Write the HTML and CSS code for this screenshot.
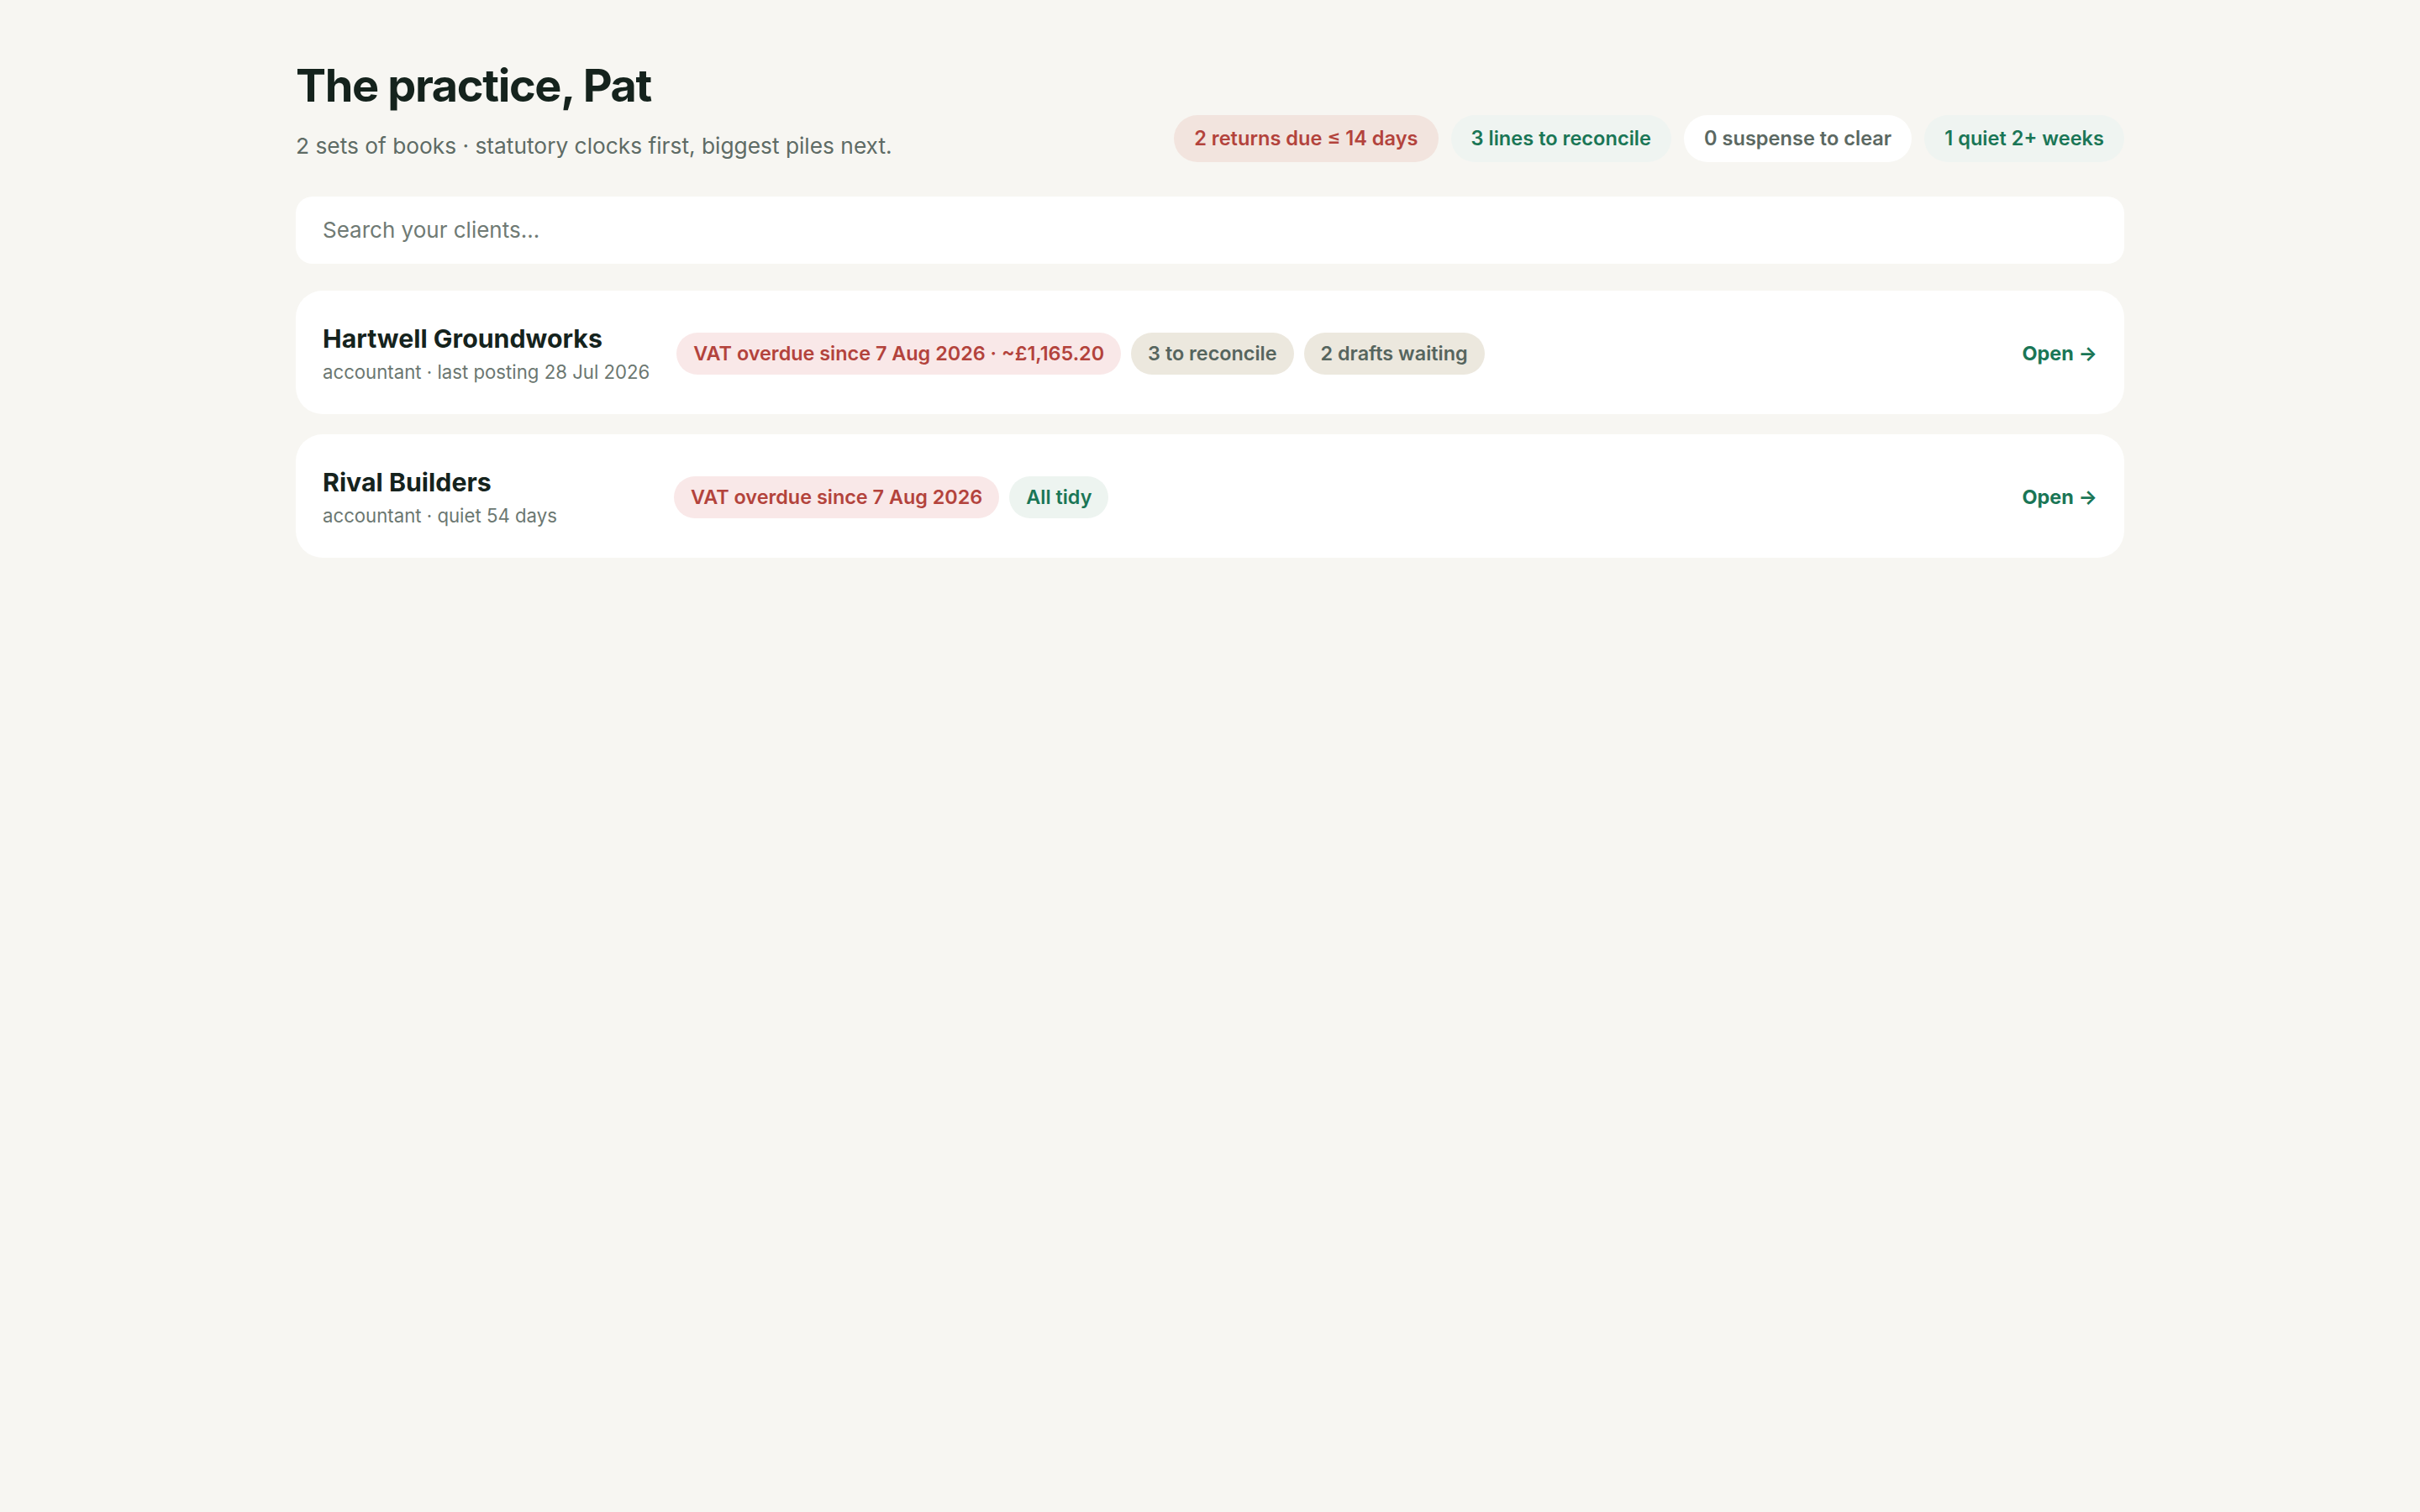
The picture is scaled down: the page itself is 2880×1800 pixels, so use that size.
FILE: index.html
```html
<!DOCTYPE html>
<html lang="en">
<head>
    <meta charset="UTF-8">
    <meta name="viewport" content="width=device-width, initial-scale=1.0">
    <title>The practice</title>
    <link rel="stylesheet" href="styles.css">
</head>
<body>
    <main class="page">
        <header class="page-head">
            <div class="intro">
                <h1>The practice, Pat</h1>
                <p class="lede">2 sets of books · statutory clocks first, biggest piles next.</p>
            </div>
            <div class="tallies">
                <span class="tally tally-due">2 returns due ≤ 14 days</span>
                <span class="tally tally-good">3 lines to reconcile</span>
                <span class="tally tally-plain">0 suspense to clear</span>
                <span class="tally tally-good">1 quiet 2+ weeks</span>
            </div>
        </header>

        <input class="search" type="search" placeholder="Search your clients...">

        <ul class="clients">
            <li class="client">
                <div class="client-id">
                    <div class="client-name">Hartwell Groundworks</div>
                    <div class="client-meta">accountant · last posting 28 Jul 2026</div>
                </div>
                <div class="chips">
                    <span class="chip chip-late">VAT overdue since 7 Aug 2026 · ~£1,165.20</span>
                    <span class="chip chip-work">3 to reconcile</span>
                    <span class="chip chip-work">2 drafts waiting</span>
                </div>
                <a class="open" href="#">Open →</a>
            </li>
            <li class="client">
                <div class="client-id">
                    <div class="client-name">Rival Builders</div>
                    <div class="client-meta">accountant · quiet 54 days</div>
                </div>
                <div class="chips">
                    <span class="chip chip-late">VAT overdue since 7 Aug 2026</span>
                    <span class="chip chip-tidy">All tidy</span>
                </div>
                <a class="open" href="#">Open →</a>
            </li>
        </ul>
    </main>
</body>
</html>
```

FILE: styles.css
```css
body {
    margin: 0;
    font-family: Inter, "Liberation Sans", sans-serif;
    background-color: #f7f6f2;
    color: #15231d;
}
.page {
    max-width: 2176px;
    margin: 0 auto;
    padding: 70px 32px 80px;
}
.page-head {
    display: flex;
    justify-content: space-between;
    align-items: flex-end;
    gap: 48px;
    margin-bottom: 41px;
}
h1 {
    margin: 0 0 19px;
    font-size: 54px;
    line-height: 1.2;
    font-weight: 700;
    letter-spacing: -0.025em;
}
.lede {
    margin: 0;
    font-size: 26.3px;
    line-height: 39px;
    color: #5e6b65;
}
.tallies {
    display: flex;
    gap: 15px;
}
.tally {
    padding: 11px 24px;
    border-radius: 999px;
    font-size: 23.6px;
    line-height: 34px;
    font-weight: 600;
    white-space: nowrap;
}
.tally-due {
    background: #f2e4de;
    color: #b3433c;
}
.tally-good {
    background: #eff4f1;
    color: #1a7656;
}
.tally-plain {
    background: #ffffff;
    color: #5b6862;
}
.search {
    display: block;
    box-sizing: border-box;
    width: 100%;
    height: 80px;
    padding: 0 32px;
    border: none;
    border-radius: 20px;
    background: #ffffff;
    font-family: inherit;
    font-size: 26px;
    color: #15231d;
    outline: none;
}
.search::placeholder {
    color: #6f7a74;
}
.clients {
    list-style: none;
    margin: 32px 0 0;
    padding: 0;
    display: flex;
    flex-direction: column;
    gap: 24px;
}
.client {
    display: flex;
    align-items: center;
    gap: 32px;
    padding: 37px 32px 34px;
    background: #ffffff;
    border-radius: 32px;
}
.client-id {
    min-width: 386px;
}
.client-name {
    font-size: 30.3px;
    line-height: 40px;
    font-weight: 700;
    color: #15231d;
}
.client-meta {
    margin-top: 4px;
    font-size: 22.2px;
    line-height: 32px;
    color: #6b7771;
}
.chips {
    flex: 1;
    display: flex;
    flex-wrap: wrap;
    gap: 12px;
}
.chip {
    padding: 8px 20px;
    border-radius: 999px;
    font-size: 23.4px;
    line-height: 34px;
    font-weight: 600;
    white-space: nowrap;
}
.chip-late {
    background: #f9e8e8;
    color: #b3433c;
}
.chip-work {
    background: #ece8de;
    color: #56655e;
}
.chip-tidy {
    background: #edf4f0;
    color: #1a7656;
}
.open {
    font-size: 23.5px;
    font-weight: 700;
    color: #1a7656;
    text-decoration: none;
    white-space: nowrap;
}
```
